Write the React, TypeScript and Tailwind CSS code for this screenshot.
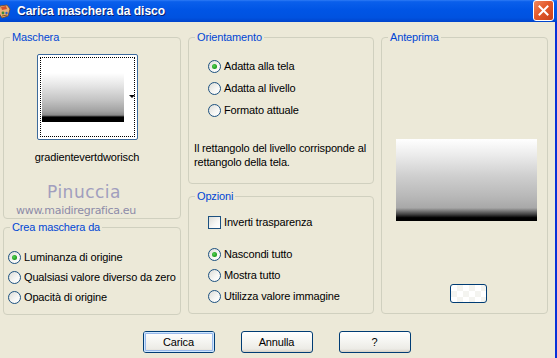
import React from "react";

const Radio = ({ checked }: { checked?: boolean }) => (
  <span className="relative w-[13px] h-[13px] rounded-full border border-[#1C5180] bg-[linear-gradient(135deg,#DCDCD7_0%,#F7F7F5_60%,#FFFFFF_100%)] shrink-0 flex items-center justify-center">
    {checked && (
      <span className="w-[5px] h-[5px] rounded-full bg-[radial-gradient(circle_at_40%_40%,#55D155_0%,#21A121_60%,#1A851A_100%)]" />
    )}
  </span>
);

const RadioRow = ({ label, checked }: { label: string; checked?: boolean }) => (
  <div className="flex items-center gap-[3px] h-[13px] whitespace-nowrap">
    <Radio checked={checked} />
    <span className="leading-[13px]">{label}</span>
  </div>
);

const Group = ({
  title,
  className,
  children,
}: {
  title: string;
  className: string;
  children?: React.ReactNode;
}) => (
  <div className={"relative border border-[#D0D0BF] rounded-[4px] " + className}>
    <span className="absolute -top-[8px] left-[6px] px-[2px] bg-[#ECE9D8] text-[#0046D5] leading-[14px] whitespace-nowrap">
      {title}
    </span>
    {children}
  </div>
);

const XPButton = ({ label, def }: { label: string; def?: boolean }) => (
  <div className="w-[72px] h-[22px] rounded-[3px] border border-[#003C74] bg-[linear-gradient(to_bottom,#FFFFFF_0%,#F4F4F0_50%,#ECEBE6_85%,#D6D0C5_100%)] flex items-center justify-center">
    <div
      className={
        "w-full h-full rounded-[2px] flex items-center justify-center " +
        (def ? "shadow-[inset_0_0_0_1px_#CEE7FF,inset_0_0_0_2px_#98B8EA]" : "")
      }
    >
      {label}
    </div>
  </div>
);

export default function App() {
  return (
    <div className="w-[557px] h-[358px] bg-[#ECE9D8] flex flex-col overflow-hidden font-['Liberation_Sans',Arial,sans-serif] text-[11px] tracking-[-0.15px] text-black">
      {/* Title bar */}
      <div className="h-[22px] shrink-0 flex items-center bg-[linear-gradient(to_bottom,#2E7BF5_0%,#0A5FEB_8%,#0055E5_45%,#0052E0_80%,#0044CC_100%)] relative">
        <svg width="14" height="16" viewBox="0 0 14 16" className="ml-[-2px] mt-[1px]">
          <path d="M2 2 L9 1 L12 5 L10 12 L4 14 L1 9 Z" fill="#E8B27A" stroke="#7A4A1E" strokeWidth="0.8" />
          <path d="M3 3 L8 2 L9 5 L4 6 Z" fill="#D2502A" />
          <circle cx="5" cy="9" r="1.4" fill="#3A8A3A" />
          <circle cx="8.5" cy="9" r="1.2" fill="#2C62C9" />
          <path d="M4 12 L9 11" stroke="#7A4A1E" strokeWidth="0.9" />
        </svg>
        <span className="ml-[5px] text-white font-bold text-[12px] tracking-[0px] font-['Liberation_Sans',sans-serif] [text-shadow:1px_1px_0_#0A1F6E]">
          Carica maschera da disco
        </span>
        <div className="absolute right-[3px] top-[0px] w-[21px] h-[21px] rounded-[3px] border border-white bg-[linear-gradient(135deg,#F08860_0%,#E35A2B_45%,#C8401A_100%)] flex items-center justify-center">
          <svg width="11" height="11" viewBox="0 0 11 11">
            <path d="M1.5 1.5 L9.5 9.5 M9.5 1.5 L1.5 9.5" stroke="white" strokeWidth="2" strokeLinecap="square" />
          </svg>
        </div>
      </div>

      <div className="flex flex-1">
        <div className="flex-1 flex flex-col">
          <div className="flex pl-[3px] pt-[15px] gap-[7px]">
            {/* Left column */}
            <div className="w-[178px] flex flex-col gap-[8px]">
              <Group title="Maschera" className="h-[182px]">
                <div className="ml-[31px] mt-[16px] w-[104px] flex flex-col items-center">
                  <div className="relative w-[101px] h-[86px] rounded-[2px] border border-[#3C6A9C] bg-white p-[2px]">
                    <div className="w-full h-full border border-dotted border-black flex pl-[1px] pt-[15px]">
                      <div className="w-[82px] h-[49px] bg-[linear-gradient(to_bottom,#FFFFFF_0%,#E6E6E6_25%,#C4C4C4_55%,#A2A2A2_78%,#8A8A8A_86%,#000000_90%,#000000_100%)]" />
                    </div>
                    <svg width="6" height="4" viewBox="0 0 6 4" className="absolute right-[2px] top-[40px]">
                      <path d="M0 0 L6 0 L3 3 Z" fill="black" />
                    </svg>
                  </div>
                  <div className="mt-[11px] leading-[13px] whitespace-nowrap">gradientevertdworisch</div>
                </div>
                <div className="mt-[20px] flex flex-col items-start ml-[12px]">
                  <div className="text-[#A19EBE] text-[17px] leading-[17px] font-['DejaVu_Sans',sans-serif] tracking-[0.5px] ml-[31px]">
                    Pinuccia
                  </div>
                  <div className="text-[#8D8BA8] text-[11px] leading-[12px] mt-[4px] font-['DejaVu_Sans',sans-serif] tracking-[-0.3px] whitespace-nowrap">
                    www.maidiregrafica.eu
                  </div>
                </div>
              </Group>
              <Group title="Crea maschera da" className="h-[88px]">
                <div className="flex flex-col gap-[7px] pl-[4px] pt-[23px]">
                  <RadioRow label="Luminanza di origine" checked />
                  <RadioRow label="Qualsiasi valore diverso da zero" />
                  <RadioRow label="Opacità di origine" />
                </div>
              </Group>
            </div>

            {/* Middle column */}
            <div className="w-[186px] flex flex-col gap-[12px]">
              <Group title="Orientamento" className="h-[147px]">
                <div className="flex flex-col gap-[9px] pl-[19px] pt-[22px]">
                  <RadioRow label="Adatta alla tela" checked />
                  <RadioRow label="Adatta al livello" />
                  <RadioRow label="Formato attuale" />
                </div>
                <div className="pl-[5px] mt-[24px] leading-[14px] whitespace-nowrap">
                  Il rettangolo del livello corrisponde al
                  <br />
                  rettangolo della tela.
                </div>
              </Group>
              <Group title="Opzioni" className="h-[118px]">
                <div className="flex flex-col pl-[19px] pt-[19px]">
                  <div className="flex items-center gap-[3px] h-[13px]">
                    <span className="w-[13px] h-[13px] border border-[#1C5180] bg-[linear-gradient(135deg,#DCDCD7_0%,#F7F7F5_60%,#FFFFFF_100%)] shrink-0" />
                    <span className="leading-[13px]">Inverti trasparenza</span>
                  </div>
                  <div className="flex flex-col gap-[8px] mt-[19px]">
                    <RadioRow label="Nascondi tutto" checked />
                    <RadioRow label="Mostra tutto" />
                    <RadioRow label="Utilizza valore immagine" />
                  </div>
                </div>
              </Group>
            </div>

            {/* Right column */}
            <Group title="Anteprima" className="w-[167px] h-[277px] flex flex-col">
              <div className="ml-[14px] mt-[101px] w-[141px] h-[82px] bg-[linear-gradient(to_bottom,#FFFFFF_0%,#EBEBEB_20%,#CFCFCF_45%,#B8B8B8_70%,#A8A8A8_84%,#404040_92%,#000000_96%,#000000_100%)]" />
              <div className="ml-[68px] mt-[63px] w-[37px] h-[19px] rounded-[3px] border border-[#003C74] bg-[repeating-conic-gradient(#F4F4F0_0%_25%,#FFFFFF_0%_50%)] bg-[length:12px_12px]" />
            </Group>
          </div>

          {/* Buttons */}
          <div className="flex justify-center gap-[26px] mt-[16px] pr-[2px]">
            <XPButton label="Carica" def />
            <XPButton label="Annulla" />
            <XPButton label="?" />
          </div>
        </div>
        <div className="w-[2px] bg-[#0831D9]" />
      </div>
    </div>
  );
}
